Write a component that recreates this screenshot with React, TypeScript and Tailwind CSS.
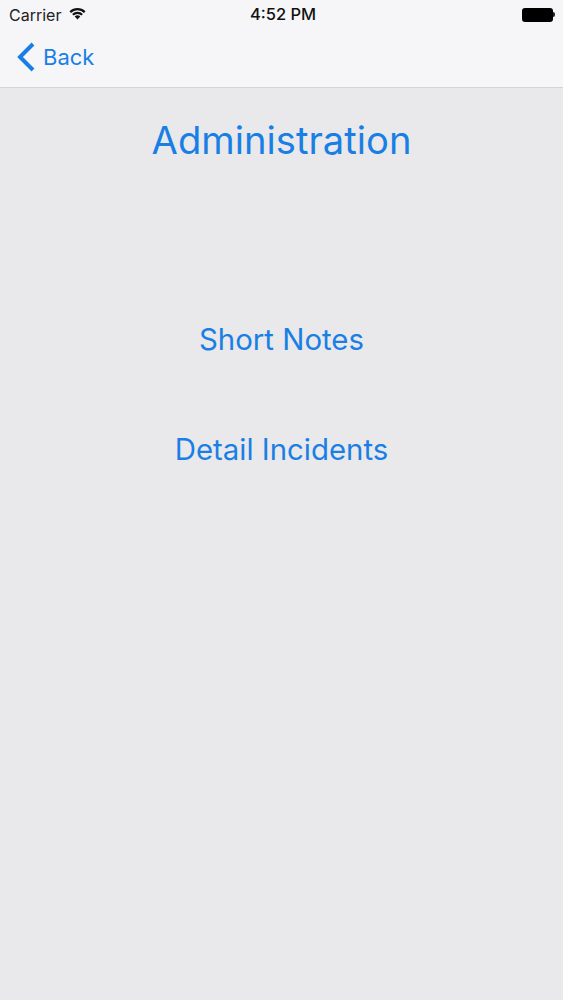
import React from "react";

function WifiIcon() {
  return (
    <svg width="17" height="13" viewBox="0 0 17 13" className="ml-[8px] mb-[3px]">
      <path d="M0.5 4.3 A11.5 11.5 0 0 1 16.5 4.3 L15 5.9 A9.3 9.3 0 0 0 2 5.9 Z" fill="#111" />
      <path d="M3.1 7 A7.8 7.8 0 0 1 13.9 7 L12.4 8.5 A5.6 5.6 0 0 0 4.6 8.5 Z" fill="#111" />
      <path d="M5.7 9.6 A4 4 0 0 1 11.3 9.6 L8.5 12.6 Z" fill="#111" />
    </svg>
  );
}

function Battery() {
  return (
    <div className="flex items-center">
      <div className="w-[31px] h-[14px] rounded-[3px] bg-black" />
      <div className="w-[2px] h-[5px] bg-[#222] rounded-r-sm" />
    </div>
  );
}

export default function App() {
  return (
    <div className="h-[1000px] w-[563px] flex flex-col bg-[#e9e9eb] font-['Inter','Liberation_Sans',sans-serif] text-[#1a7fe4]">
      {/* Nav bar */}
      <div className="h-[88px] shrink-0 bg-[#f6f6f8] border-b border-[#d4d4d6]">
        <div className="h-[29px] pl-[9px] pr-[8px] flex items-center justify-between text-[#222] text-[16px]">
          <div className="flex-1 flex items-center">
            <span>Carrier</span>
            <WifiIcon />
          </div>
          <span className="font-medium text-[#111] text-[16.5px] ml-[2px]">4:52 PM</span>
          <div className="flex-1 flex justify-end">
            <Battery />
          </div>
        </div>
        <div className="flex items-center pl-[16px] h-[56px]">
          <svg width="20" height="30" viewBox="0 0 20 30" className="mr-[7px]">
            <path d="M17 2 L4 15 L17 28" fill="none" stroke="#1a7fe4" strokeWidth="4" />
          </svg>
          <span className="text-[22px]">Back</span>
        </div>
      </div>

      {/* Content */}
      <div className="flex flex-col items-center">
        <h1 className="mt-[25px] text-[38.2px] leading-[54px]">Administration</h1>
        <div className="mt-[151px] text-[29.4px] leading-[44px]">Short Notes</div>
        <div className="mt-[66px] text-[29.4px] leading-[44px]">Detail Incidents</div>
      </div>
    </div>
  );
}
